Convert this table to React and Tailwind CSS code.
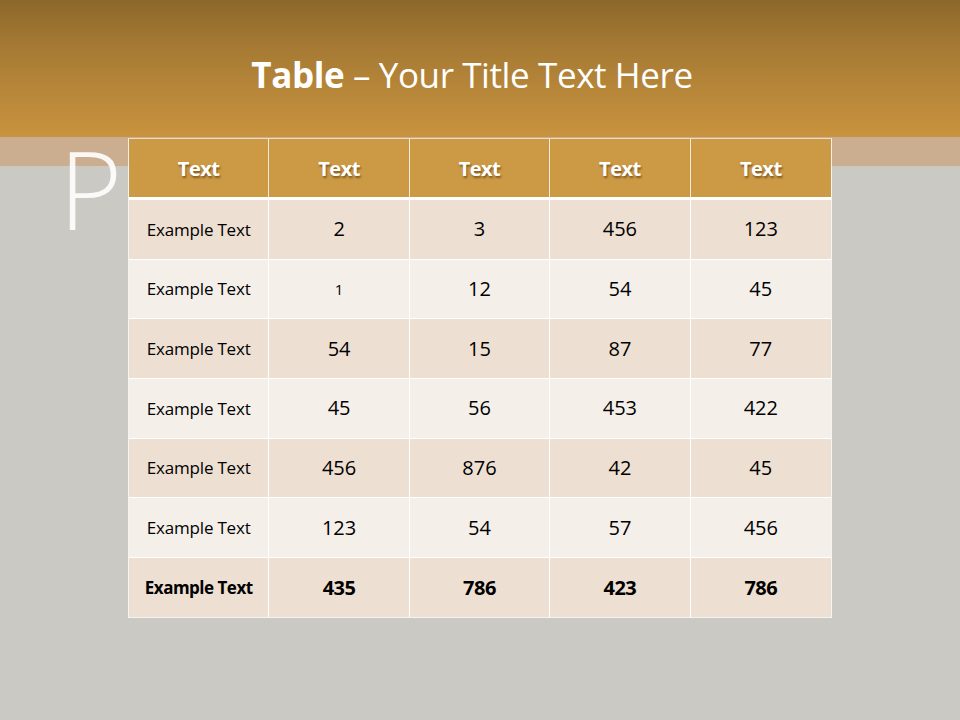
const rows = [
  ["Example Text", "2", "3", "456", "123"],
  ["Example Text", "1", "12", "54", "45"],
  ["Example Text", "54", "15", "87", "77"],
  ["Example Text", "45", "56", "453", "422"],
  ["Example Text", "456", "876", "42", "45"],
  ["Example Text", "123", "54", "57", "456"],
];
const total = ["Example Text", "435", "786", "423", "786"];

export default function App() {
  return (
    <div
      className="relative w-[960px] h-[720px] overflow-hidden bg-[linear-gradient(to_bottom,#8c682c_0px,#a77b34_50px,#c9933f_137px,#cbae90_137px,#cbae90_166px,#cbc9c3_166px,#cbc9c3_720px)]"
      style={{ fontFamily: '"Open Sans", "Liberation Sans", sans-serif' }}
    >
      <div className="absolute left-[59px] top-[135px] text-[108px] font-light leading-none text-white/90 select-none">
        P
      </div>
      <div className="h-[138px] flex items-start justify-center pt-[52px] pr-[16px]">
        <h1 className="text-[35px] leading-[46px] text-white tracking-[-0.4px]">
          <span className="font-bold">Table</span> – Your Title Text Here
        </h1>
      </div>
      <div className="relative ml-[128px] w-[704px] border border-white/80 border-t-[#e9dccb]">
        <div className="grid grid-cols-5 h-[61px] bg-[#cc9944] border-b-[3px] border-white">
          {["Text", "Text", "Text", "Text", "Text"].map((t, i) => (
            <div
              key={i}
              className={`flex items-center justify-center pt-[2px] text-white font-bold text-[20px] tracking-[-0.5px] [text-shadow:1px_2px_2px_rgba(80,50,10,0.6)] ${i < 4 ? "border-r border-white/80" : ""}`}
            >
              {t}
            </div>
          ))}
        </div>
        {rows.map((r, ri) => (
          <div
            key={ri}
            className={`grid grid-cols-5 h-[59.7px] border-b border-white ${ri % 2 === 0 ? "bg-[#eddfd1]" : "bg-[#f5efea]"}`}
          >
            {r.map((c, ci) => (
              <div
                key={ci}
                className={`flex items-center justify-center text-black ${ci === 0 ? "text-[17px] tracking-[-0.2px]" : c === "1" ? "text-[15px]" : "text-[20px]"} ${ci < 4 ? "border-r border-white" : ""}`}
              >
                {c}
              </div>
            ))}
          </div>
        ))}
        <div className="grid grid-cols-5 h-[59px] bg-[#eddfd1]">
          {total.map((c, ci) => (
            <div
              key={ci}
              className={`flex items-center justify-center text-black font-bold tracking-[-0.5px] ${ci === 0 ? "text-[17px]" : "text-[20px]"} ${ci < 4 ? "border-r border-white" : ""}`}
            >
              {c}
            </div>
          ))}
        </div>
      </div>
    </div>
  );
}
